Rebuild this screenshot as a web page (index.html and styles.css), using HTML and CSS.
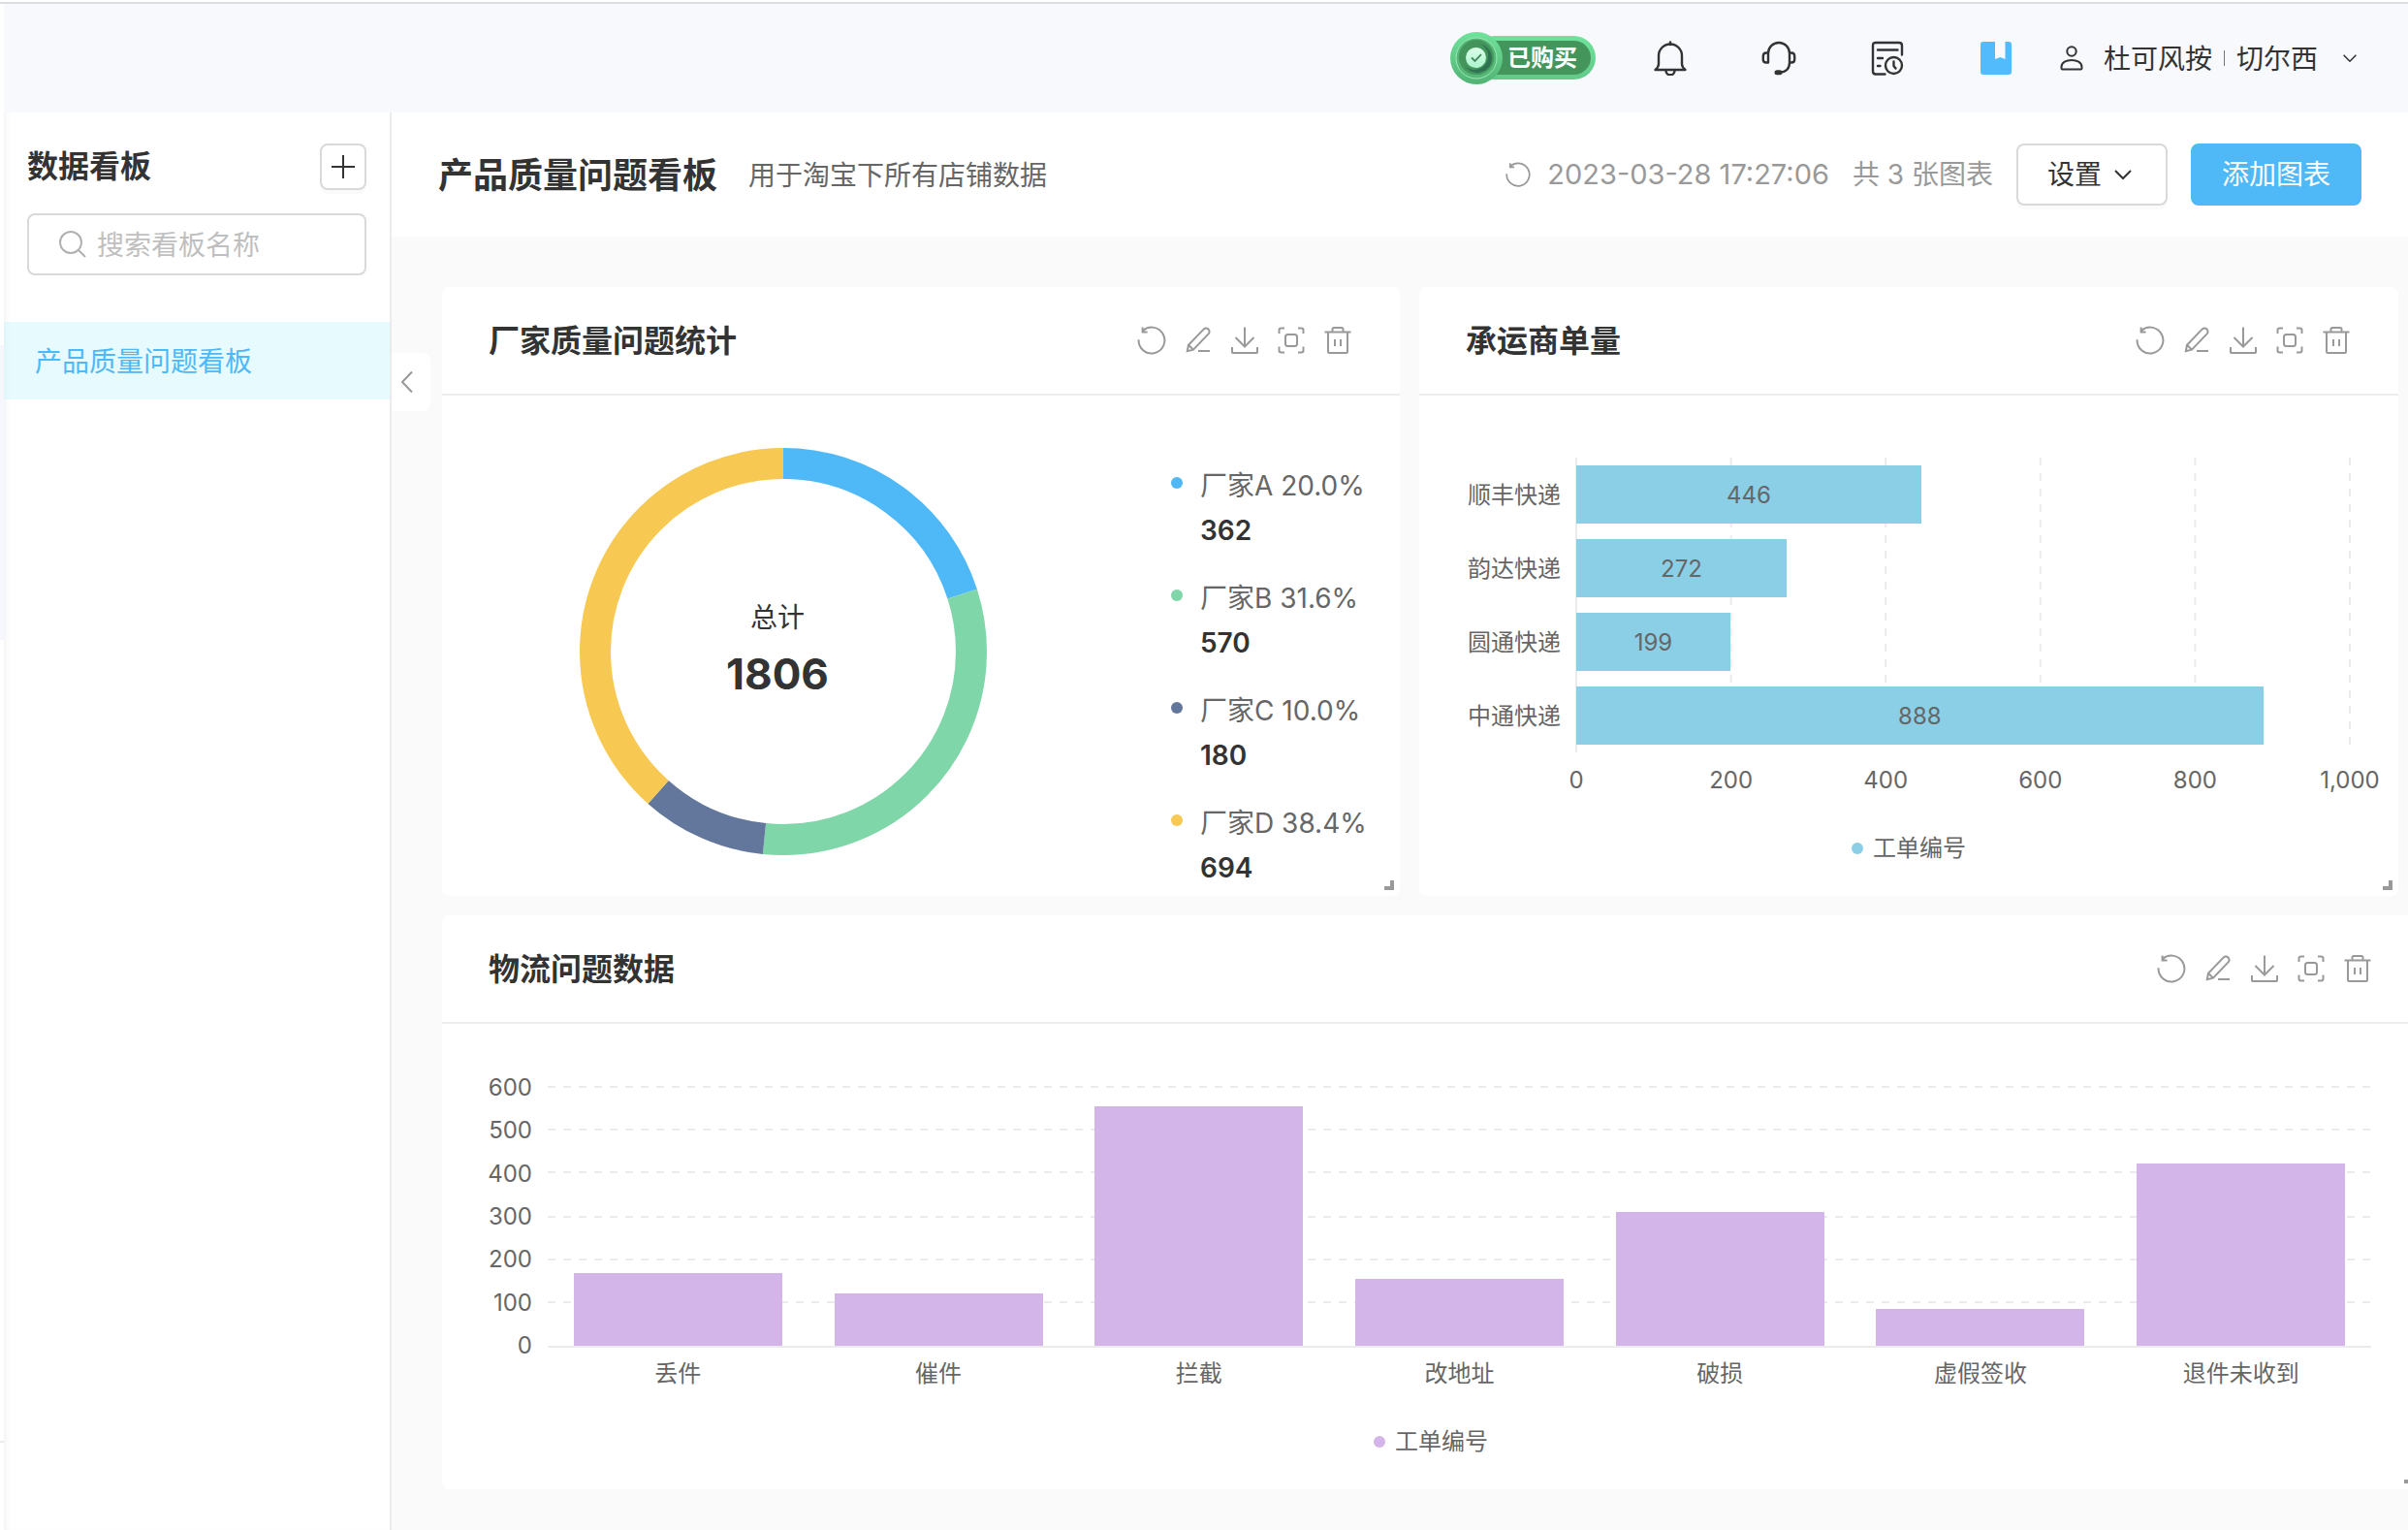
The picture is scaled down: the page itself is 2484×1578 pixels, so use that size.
FILE: index.html
```html
<!DOCTYPE html>
<html lang="zh-CN">
<head>
<meta charset="utf-8">
<title>产品质量问题看板</title>
<link rel="stylesheet" href="styles.css">
</head>
<body>
<svg class="sprite" aria-hidden="true">
  <symbol id="i-refresh" viewBox="0 0 32 32"><path d="M2.6 15.2A13.4 13.4 0 1 0 7 6.100M6.600 2.600V7.400H11.600"/></symbol>
  <symbol id="i-edit" viewBox="0 0 32 32"><path d="M4.800 27.200L6 20.800L21.600 4.600A3.400 3.400 0 0 1 26.600 9.400L11 25.600ZM6 20.800L11 25.600M16 27H28"/></symbol>
  <symbol id="i-download" viewBox="0 0 32 32"><path d="M16 2.500V22.500M6.500 13L16 22.500L25.500 13M3 23V28.200Q3 29 3.800 29H28.200Q29 29 29 28.200V23"/></symbol>
  <symbol id="i-focus" viewBox="0 0 32 32"><path d="M3.500 9V5.500Q3.500 3.500 5.500 3.500H9M23 3.500H26.500Q28.500 3.500 28.500 5.500V9M28.500 22.500V26.500Q28.500 28.500 26.500 28.500H23M9 28.500H5.500Q3.500 28.500 3.500 26.500V22.500"/><rect x="10" y="10" width="12" height="12" rx="2.500"/></symbol>
  <symbol id="i-trash" viewBox="0 0 32 32"><path d="M2.500 7.500H29.500M10.500 7V4.500Q10.500 3 12 3H20Q21.500 3 21.500 4.500V7M6 8V27.500Q6 29 7.500 29H24.500Q26 29 26 27.500V8M13 15V22M19 15V22"/></symbol>
  <symbol id="i-chevron" viewBox="0 0 20 20"><path d="M2 6L10 14L18 6"/></symbol>
</svg>

<div class="app">
  <div class="rail"><div class="rail-active"></div><div class="rail-foot"></div></div>
  <div class="shell">
    <header class="topbar">
      <div class="badge">
        <svg class="badge-art" viewBox="0 0 152 56" aria-hidden="true">
          <defs>
            <linearGradient id="pill" x1="0" y1="0" x2="0" y2="1"><stop offset="0" stop-color="#6fe39b"/><stop offset="1" stop-color="#62c98a"/></linearGradient>
            <linearGradient id="medal" x1="0" y1="0" x2="0" y2="1"><stop offset="0" stop-color="#6fe39b"/><stop offset="1" stop-color="#52b374"/></linearGradient>
            <linearGradient id="dot" x1="0" y1="0" x2="0" y2="1"><stop offset="0" stop-color="#dcfdea"/><stop offset="1" stop-color="#a9f5cb"/></linearGradient>
          </defs>
          <rect x="24" y="5" width="127" height="45" rx="22.500" fill="url(#pill)"/>
          <rect x="26" y="10" width="120" height="35" rx="17.500" fill="#44955b"/>
          <circle cx="28" cy="28" r="27" fill="url(#medal)"/>
          <circle cx="28" cy="28" r="21" fill="#55b878" stroke="#9be8b8" stroke-width="1"/>
          <circle cx="28" cy="27" r="18" fill="#44955b"/>
          <circle cx="29" cy="28" r="15" fill="#2f7253"/>
          <circle cx="26" cy="26" r="14" fill="#44955b"/>
          <circle cx="27.500" cy="27.500" r="10.500" fill="url(#dot)"/>
          <path d="M23 27.500L26.500 31L33 24" fill="none" stroke="#44855b" stroke-width="1.800"/>
        </svg>
        <span class="badge-text">已购买</span>
      </div>
      <nav class="tools">
        <button class="tool" aria-label="通知"><svg viewBox="0 0 36 36"><path d="M2.500 30C5 28 6 27 6 24V15.500A12 12 0 0 1 30 15.500V24C30 27 31 28 33.500 30Z"/><path d="M18 1.500V4M13.500 31A4.500 4.300 0 0 0 22.500 31"/></svg></button>
        <button class="tool" aria-label="客服"><svg viewBox="0 0 36 36"><path d="M7 22.500V13A11 11 0 0 1 29 13V22.500C29 29 25 32.500 19 32.700M7 12.500H5Q1.800 12.500 1.800 16V19.500Q1.800 22.500 5 22.500H7M29 12.500H31Q34.200 12.500 34.200 16V19.500Q34.200 22.500 31 22.500H29"/><path d="M16 32.700H19" stroke-width="5"/></svg></button>
        <button class="tool" aria-label="记录"><svg viewBox="0 0 36 36"><path d="M15.500 34.500H6Q3 34.500 3 31.500V5Q3 2 6 2H30Q33 2 33 5V14.500M8 9.500H28.500M8 18H13M8 26H10.500"/><circle cx="24.500" cy="25.500" r="8.500"/><path d="M24.500 21.500V26L26.500 28.500"/></svg></button>
        <button class="tool tool-book" aria-label="手册"><svg viewBox="0 0 36 36"><path d="M5 1H17V19L22.500 17L27.500 19V1H31Q34 1 34 4V32Q34 35 31 35H5Q2 35 2 32V4Q2 1 5 1Z"/></svg></button>
      </nav>
      <button class="account">
        <svg class="user-icon" viewBox="0 0 24 28" aria-hidden="true"><circle cx="12" cy="7" r="4.700"/><path d="M1.500 24.500V23C1.500 13.500 22.500 13.500 22.500 23V24.500Q22.500 25.500 21.500 25.500H2.500Q1.500 25.500 1.500 24.500Z"/></svg>
        <span>杜可风按</span><i class="divider"></i><span>切尔西</span>
        <svg class="chev-sm" aria-hidden="true"><use href="#i-chevron"/></svg>
      </button>
    </header>

    <div class="workspace">
      <aside class="sidebar">
        <div class="side-head">
          <h2>数据看板</h2>
          <button class="add-board" aria-label="新建看板"><svg viewBox="0 0 24 24"><path d="M12 0V24M0 12H24"/></svg></button>
        </div>
        <label class="search">
          <svg viewBox="0 0 30 30" aria-hidden="true"><circle cx="13" cy="13" r="11"/><path d="M21 21L28 28"/></svg>
          <input type="text" placeholder="搜索看板名称" aria-label="搜索看板名称">
        </label>
        <a class="board-link" href="#">产品质量问题看板</a>
      </aside>

      <main class="main">
        <button class="collapse" aria-label="收起侧栏"><svg viewBox="0 0 12 24"><path d="M11 1.500L1 12L11 22.500"/></svg></button>
        <div class="board-head">
          <h1>产品质量问题看板</h1>
          <p class="board-desc">用于淘宝下所有店铺数据</p>
          <div class="board-meta">
            <svg class="meta-refresh" aria-hidden="true"><use href="#i-refresh"/></svg>
            <time>2023-03-28 17:27:06</time>
            <span>共 3 张图表</span>
          </div>
          <button class="btn">设置<svg class="chev-md" aria-hidden="true"><use href="#i-chevron"/></svg></button>
          <button class="btn btn-primary">添加图表</button>
        </div>

        <div class="grid">
          <section class="card card-pie">
            <header class="card-head">
              <h3>厂家质量问题统计</h3>
              <div class="actions">
                <button aria-label="刷新"><svg><use href="#i-refresh"/></svg></button>
                <button aria-label="编辑"><svg><use href="#i-edit"/></svg></button>
                <button aria-label="下载"><svg><use href="#i-download"/></svg></button>
                <button aria-label="全屏"><svg><use href="#i-focus"/></svg></button>
                <button aria-label="删除"><svg><use href="#i-trash"/></svg></button>
              </div>
            </header>
            <div class="pie-body">
              <div class="pie-pane">
                <div class="donut">
                  <svg viewBox="0 0 420 420" aria-hidden="true">
                    <g fill="none" stroke-width="32" transform="rotate(-90 210 210)">
                      <circle cx="210" cy="210" r="194" pathLength="1806" stroke="#4fb8f7" stroke-dasharray="362 1444"/>
                      <circle cx="210" cy="210" r="194" pathLength="1806" stroke="#7ed6a9" stroke-dasharray="570 1236" stroke-dashoffset="-362"/>
                      <circle cx="210" cy="210" r="194" pathLength="1806" stroke="#63769b" stroke-dasharray="180 1626" stroke-dashoffset="-932"/>
                      <circle cx="210" cy="210" r="194" pathLength="1806" stroke="#f7c952" stroke-dasharray="694 1112" stroke-dashoffset="-1112"/>
                    </g>
                  </svg>
                  <div class="donut-total"><span>总计</span><strong>1806</strong></div>
                </div>
              </div>
              <ul class="pie-legend">
                <li class="c-a"><span>厂家A 20.0%</span><b>362</b></li>
                <li class="c-b"><span>厂家B 31.6%</span><b>570</b></li>
                <li class="c-c"><span>厂家C 10.0%</span><b>180</b></li>
                <li class="c-d"><span>厂家D 38.4%</span><b>694</b></li>
              </ul>
            </div>
            <i class="resize"></i>
          </section>

          <section class="card card-carrier">
            <header class="card-head">
              <h3>承运商单量</h3>
              <div class="actions">
                <button aria-label="刷新"><svg><use href="#i-refresh"/></svg></button>
                <button aria-label="编辑"><svg><use href="#i-edit"/></svg></button>
                <button aria-label="下载"><svg><use href="#i-download"/></svg></button>
                <button aria-label="全屏"><svg><use href="#i-focus"/></svg></button>
                <button aria-label="删除"><svg><use href="#i-trash"/></svg></button>
              </div>
            </header>
            <div class="chart">
              <div class="hchart">
                <div class="hcats"><span>顺丰快递</span><span>韵达快递</span><span>圆通快递</span><span>中通快递</span></div>
                <div class="hplot">
                  <svg class="gridlines" aria-hidden="true">
                    <line class="axis" x1="0" y1="0" x2="0" y2="100%"/>
                    <line x1="20%" y1="0" x2="20%" y2="100%"/>
                    <line x1="40%" y1="0" x2="40%" y2="100%"/>
                    <line x1="60%" y1="0" x2="60%" y2="100%"/>
                    <line x1="80%" y1="0" x2="80%" y2="100%"/>
                    <line x1="100%" y1="0" x2="100%" y2="100%"/>
                  </svg>
                  <div class="hbar" style="width:44.6%">446</div>
                  <div class="hbar" style="width:27.2%">272</div>
                  <div class="hbar" style="width:19.9%">199</div>
                  <div class="hbar" style="width:88.8%">888</div>
                </div>
                <div class="hticks"><span>0</span><span>200</span><span>400</span><span>600</span><span>800</span><span>1,000</span></div>
              </div>
              <div class="legend legend-blue">工单编号</div>
            </div>
            <i class="resize"></i>
          </section>

          <section class="card card-wide">
            <header class="card-head">
              <h3>物流问题数据</h3>
              <div class="actions">
                <button aria-label="刷新"><svg><use href="#i-refresh"/></svg></button>
                <button aria-label="编辑"><svg><use href="#i-edit"/></svg></button>
                <button aria-label="下载"><svg><use href="#i-download"/></svg></button>
                <button aria-label="全屏"><svg><use href="#i-focus"/></svg></button>
                <button aria-label="删除"><svg><use href="#i-trash"/></svg></button>
              </div>
            </header>
            <div class="chart">
              <div class="vchart">
                <div class="vticks"><span>600</span><span>500</span><span>400</span><span>300</span><span>200</span><span>100</span><span>0</span></div>
                <div class="vplot">
                  <svg class="gridlines" aria-hidden="true">
                    <line x1="0" y1="1" x2="100%" y2="1"/>
                    <line x1="0" y1="45" x2="100%" y2="45"/>
                    <line x1="0" y1="89" x2="100%" y2="89"/>
                    <line x1="0" y1="135" x2="100%" y2="135"/>
                    <line x1="0" y1="179" x2="100%" y2="179"/>
                    <line x1="0" y1="223" x2="100%" y2="223"/>
                    <line class="axis" x1="0" y1="269" x2="100%" y2="269"/>
                  </svg>
                  <div class="vcol"><div class="vbar" style="height:28%"></div></div>
                  <div class="vcol"><div class="vbar" style="height:20%"></div></div>
                  <div class="vcol"><div class="vbar" style="height:92.2%"></div></div>
                  <div class="vcol"><div class="vbar" style="height:25.700%"></div></div>
                  <div class="vcol"><div class="vbar" style="height:51.500%"></div></div>
                  <div class="vcol"><div class="vbar" style="height:14%"></div></div>
                  <div class="vcol"><div class="vbar" style="height:70.200%"></div></div>
                </div>
                <div class="vcats"><span>丢件</span><span>催件</span><span>拦截</span><span>改地址</span><span>破损</span><span>虚假签收</span><span>退件未收到</span></div>
              </div>
              <div class="legend legend-purple">工单编号</div>
            </div>
            <i class="resize"></i>
          </section>
        </div>
      </main>
    </div>
  </div>
</div>
</body>
</html>
```
FILE: styles.css
```css
* { box-sizing: border-box; }

body {
  margin: 0;
  background: #fff;
  color: #333;
  font-family: Inter, "Noto Sans CJK SC", sans-serif;
  font-size: 28px;
  line-height: 40px;
  overflow: hidden;
}

h1, h2, h3, p, ul { margin: 0; padding: 0; }
h1, h2, h3 { font-weight: 600; }
ul { list-style: none; }
button {
  font: inherit;
  color: inherit;
  background: none;
  border: 0;
  padding: 0;
  cursor: pointer;
}
svg { display: block; fill: none; stroke: currentColor; stroke-width: 2; }
.sprite { position: absolute; width: 0; height: 0; }

/* Page frame */
.app {
  display: flex;
  min-height: 100vh;
  padding-top: 2px;
}
.rail { flex: 0 0 4px; border-top: 2px solid #dcdee2; }
.rail-active { margin-top: 352px; height: 304px; background: #f5f7fc; }
.rail-foot { margin-top: 826px; height: 2px; background: #ebebeb; }
.shell {
  flex: 1;
  min-width: 0;
  display: flex;
  flex-direction: column;
  border-top: 2px solid #dcdee2;
  box-shadow: inset 6px 0 6px -4px rgba(0, 0, 0, 0.06);
}

/* Top bar */
.topbar {
  display: flex;
  align-items: center;
  justify-content: flex-end;
  height: 112px;
  padding-right: 52px;
  background: #f7f9fd;
}
.badge { display: grid; align-items: center; width: 152px; margin-right: 58px; }
.badge-art, .badge-text { grid-area: 1 / 1; }
.badge-art { width: 152px; height: 56px; stroke: none; }
.badge-text {
  padding-left: 60px;
  color: #fff;
  font-size: 24px;
  font-weight: 700;
  z-index: 1;
}
.tools { display: flex; gap: 76px; margin-right: 48px; }
.tool { width: 36px; height: 36px; }
.tool svg { width: 36px; height: 36px; stroke-width: 2.4; stroke-linecap: round; stroke-linejoin: round; }
.tool-book svg { fill: #51bbfb; stroke: none; }
.account { display: flex; align-items: center; }
.account span { padding-top: 2px; }
.user-icon { width: 24px; height: 28px; margin-right: 21px; }
.divider { width: 1px; height: 16px; margin: 0 12px; background: #777; }
.chev-sm { width: 16px; height: 16px; margin-left: 25px; }

/* Sidebar */
.workspace { flex: 1; display: flex; min-height: 0; }
.sidebar {
  flex: 0 0 400px;
  min-width: 0;
  border-right: 2px solid #ebebeb;
}
.side-head {
  display: flex;
  align-items: center;
  justify-content: space-between;
  padding: 32px 24px 24px;
}
.side-head h2 { font-size: 32px; line-height: 48px; }
.add-board {
  display: grid;
  place-items: center;
  width: 48px;
  height: 48px;
  border: 2px solid #d9d9d9;
  border-radius: 8px;
  box-shadow: 0 4px 0 rgba(0, 0, 0, 0.02);
}
.add-board svg { width: 24px; height: 24px; }
.search {
  display: flex;
  align-items: center;
  gap: 10px;
  height: 64px;
  margin: 0 24px 48px;
  padding: 0 30px;
  border: 2px solid #d9d9d9;
  border-radius: 8px;
}
.search svg { flex: none; width: 30px; height: 30px; color: #b0b0b0; stroke-width: 2; }
.search input {
  flex: 1;
  width: 100%;
  min-width: 0;
  padding: 2px 0 0;
  border: 0;
  outline: 0;
  background: none;
  font: inherit;
  color: #333;
}
.search input::placeholder { color: #bfbfbf; opacity: 1; }
.board-link {
  display: block;
  padding: 21px 32px 19px;
  background: rgba(208, 246, 253, 0.5);
  color: #4fb8f7;
  text-decoration: none;
}

/* Board header */
.main {
  position: relative;
  flex: 1;
  min-width: 0;
  overflow: hidden;
  background: #fafafa;
}
.collapse {
  position: absolute;
  left: 0;
  top: 248px;
  display: grid;
  place-items: center;
  width: 40px;
  height: 60px;
  padding-right: 8px;
  border-radius: 0 8px 8px 0;
  background: #fff;
  color: #999;
}
.collapse svg { width: 12px; height: 24px; }
.board-head {
  display: flex;
  align-items: center;
  height: 128px;
  padding: 0 48px;
  background: #fff;
}
.board-head h1 { padding-top: 2px; font-size: 36px; }
.board-desc { margin-left: 32px; padding-top: 2px; color: #666; }
.board-meta {
  display: flex;
  align-items: center;
  margin-left: auto;
  margin-right: 24px;
  color: #999;
}
.meta-refresh { width: 28px; height: 28px; margin-right: 16px; }
.board-meta time { margin-right: 24px; font-size: 29px; }
.btn {
  display: flex;
  align-items: center;
  justify-content: center;
  gap: 12px;
  height: 64px;
  padding: 0 30px;
  border: 2px solid #d9d9d9;
  border-radius: 8px;
  box-shadow: 0 4px 0 rgba(0, 0, 0, 0.02);
}
.btn-primary {
  margin-left: 24px;
  border-color: #4fb8f7;
  background: #4fb8f7;
  color: #fff;
  box-shadow: none;
}
.chev-md { width: 20px; height: 20px; margin-right: 4px; }

/* Cards; the grid runs past the right edge of the window */
.grid {
  display: grid;
  grid-template-columns: 988fr 1010fr 2px;
  gap: 20px;
  margin: 52px -12px 40px 52px;
}
.card {
  position: relative;
  min-width: 0;
  background: #fff;
  border-radius: 8px;
}
.card-pie, .card-carrier { min-height: 628px; }
.card-wide { grid-column: 1 / -1; min-height: 592px; }
.card-head {
  display: flex;
  align-items: center;
  justify-content: space-between;
  height: 112px;
  padding: 0 48px;
  border-bottom: 2px solid #ededed;
}
.card-head h3 { padding-top: 2px; font-size: 32px; }
.actions { display: flex; gap: 16px; color: #999; }
.actions button, .actions svg { width: 32px; height: 32px; }
.resize {
  position: absolute;
  right: 6px;
  bottom: 6px;
  width: 10px;
  height: 10px;
  border: solid #999;
  border-width: 0 4px 4px 0;
}

/* Donut */
.pie-body { display: flex; }
.pie-pane { flex: 1; display: flex; justify-content: center; padding-top: 54px; }
.donut { display: grid; place-items: center; width: 420px; height: 420px; }
.donut > * { grid-area: 1 / 1; }
.donut svg { width: 420px; height: 420px; stroke: none; }
.donut-total {
  display: flex;
  flex-direction: column;
  align-items: center;
  gap: 10px;
  padding: 0 12px 4px 0;
}
.donut-total strong { font-size: 44px; line-height: 56px; }
.pie-legend {
  display: flex;
  flex-direction: column;
  gap: 24px;
  flex: 0 0 284px;
  padding: 70px 0 0 48px;
}
.pie-legend li {
  display: grid;
  grid-template-columns: 12px 1fr;
  column-gap: 18px;
  align-items: center;
}
.pie-legend li::before {
  content: "";
  width: 12px;
  height: 12px;
  margin-bottom: 6px;
  border-radius: 50%;
  background: currentColor;
}
.pie-legend span, .pie-legend b { grid-column: 2; line-height: 46px; }
.pie-legend span { color: #666; }
.pie-legend b { color: #333; font-weight: 600; }
.c-a { color: #4fb8f7; }
.c-b { color: #7ed6a9; }
.c-c { color: #63769b; }
.c-d { color: #f7c952; }

/* Bar charts */
.chart {
  padding: 64px 50px 0 48px;
  color: #666;
  font-size: 24px;
  line-height: 32px;
}
.gridlines {
  position: absolute;
  inset: 0;
  width: 100%;
  height: 100%;
  overflow: visible;
  stroke: #ebebeb;
  stroke-dasharray: 8 8;
}
.gridlines .axis { stroke-dasharray: none; }
.legend {
  display: flex;
  align-items: center;
  justify-content: center;
  gap: 10px;
  margin-top: 27px;
  padding-left: 2px;
}
.legend::before {
  content: "";
  width: 12px;
  height: 12px;
  border-radius: 50%;
}
.legend-blue::before { background: #8bcfe6; }
.legend-purple::before { background: #d3b5e9; }

.hchart {
  display: grid;
  grid-template-columns: 98px 1fr;
  grid-template-rows: 304px 56px;
  column-gap: 16px;
}
.hcats { display: grid; grid-auto-rows: 1fr; align-items: center; justify-items: end; }
.hcats span, .hticks, .vcats, .vticks span { padding-top: 2px; }
.hplot {
  position: relative;
  display: grid;
  grid-auto-rows: 1fr;
  align-items: center;
}
.hbar {
  position: relative;
  height: 60px;
  line-height: 62px;
  background: #8bcfe6;
  text-align: center;
}
.hticks { grid-column: 2; display: flex; justify-content: space-between; align-items: center; }
.hticks span { display: flex; justify-content: center; width: 0; }

.vchart {
  display: grid;
  grid-template-columns: 45px 1fr;
  grid-template-rows: 268px 56px;
  column-gap: 16px;
}
.vticks { display: flex; flex-direction: column; justify-content: space-between; text-align: right; }
.vticks span { display: flex; align-items: center; justify-content: flex-end; height: 2px; }
.vplot { position: relative; display: grid; grid-template-columns: repeat(7, 1fr); }
.vcol { position: relative; display: flex; align-items: flex-end; padding: 0 10%; }
.vbar { width: 100%; background: #d3b5e9; }
.vcats { grid-column: 2; display: grid; grid-template-columns: repeat(7, 1fr); align-items: center; text-align: center; }
```
